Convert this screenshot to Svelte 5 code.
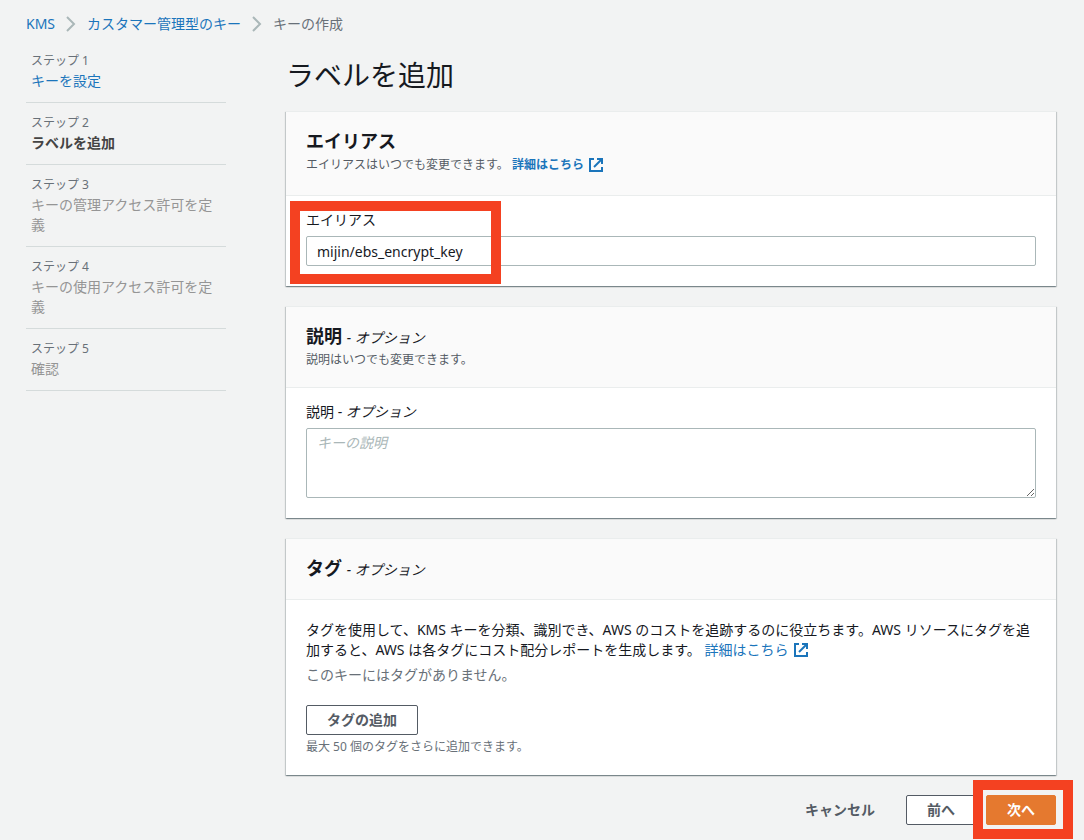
<script>
    const steps = [
        { title: 'キーを設定', state: 'done' },
        { title: 'ラベルを追加', state: 'active' },
        { title: 'キーの管理アクセス許可を定義', state: 'todo' },
        { title: 'キーの使用アクセス許可を定義', state: 'todo' },
        { title: '確認', state: 'todo' }
    ];

    let alias = $state('mijin/ebs_encrypt_key');
    let description = $state('');
</script>

{#snippet chevron()}
    <svg class="chevron" width="10" height="16" viewBox="0 0 10 16" fill="none" stroke="currentColor" stroke-width="2" aria-hidden="true">
        <path d="M1 1l7 7-7 7" />
    </svg>
{/snippet}

{#snippet external()}
    <svg class="external" width="16" height="16" viewBox="0 0 16 16" fill="none" stroke="currentColor" stroke-width="2" aria-hidden="true">
        <path d="M6 2H2v12h12v-4" />
        <path d="M9 2h5v5" />
        <path d="M6 10l8-8" />
    </svg>
{/snippet}

<nav class="breadcrumb" aria-label="breadcrumb">
    <a href="#kms">KMS</a>
    {@render chevron()}
    <a href="#keys">カスタマー管理型のキー</a>
    {@render chevron()}
    <span>キーの作成</span>
</nav>

<div class="layout">
    <ol class="steps">
        {#each steps as step, i}
            <li class={step.state}>
                <small>ステップ {i + 1}</small>
                {#if step.state === 'done'}
                    <a href="#step1">{step.title}</a>
                {:else}
                    <span>{step.title}</span>
                {/if}
            </li>
        {/each}
    </ol>

    <main>
        <h1>ラベルを追加</h1>

        <section class="card">
            <header>
                <h2>エイリアス</h2>
                <p class="with-link">エイリアスはいつでも変更できます。 <a class="strong" href="#alias-help">詳細はこちら {@render external()}</a></p>
            </header>
            <div class="body field">
                <div class="marked">
                    <label for="alias">エイリアス</label>
                    <input id="alias" type="text" bind:value={alias} />
                    <div class="marker marker-alias"></div>
                </div>
            </div>
        </section>

        <section class="card">
            <header>
                <h2>説明 <em>- オプション</em></h2>
                <p>説明はいつでも変更できます。</p>
            </header>
            <div class="body field">
                <label for="description">説明 - <em>オプション</em></label>
                <textarea id="description" placeholder="キーの説明" bind:value={description}></textarea>
            </div>
        </section>

        <section class="card">
            <header>
                <h2>タグ <em>- オプション</em></h2>
            </header>
            <div class="body">
                <p>タグを使用して、KMS キーを分類、識別でき、AWS のコストを追跡するのに役立ちます。AWS リソースにタグを追加すると、AWS は各タグにコスト配分レポートを生成します。 <a href="#tag-help">詳細はこちら {@render external()}</a></p>
                <p class="empty">このキーにはタグがありません。</p>
                <button type="button">タグの追加</button>
                <p class="hint">最大 50 個のタグをさらに追加できます。</p>
            </div>
        </section>

        <footer>
            <button type="button" class="link">キャンセル</button>
            <button type="button">前へ</button>
            <div class="marked">
                <button type="button" class="primary">次へ</button>
                <div class="marker marker-next"></div>
            </div>
        </footer>
    </main>
</div>

<style>
    :global(body) {
        margin: 0;
        background: #f2f3f3;
        color: #16191f;
        font-family: 'Noto Sans', 'Noto Sans CJK JP', sans-serif;
        font-size: 14px;
        line-height: 20px;
    }

    h1, h2, p, ol {
        margin: 0;
        padding: 0;
        font-weight: 400;
    }

    a {
        color: #1b75bb;
        text-decoration: none;
    }

    a:hover {
        text-decoration: underline;
    }

    /* Breadcrumb */

    .breadcrumb {
        display: flex;
        align-items: center;
        gap: 11px;
        padding: 14px 26px 7px;
        color: #687078;
    }

    .chevron {
        color: #aab7b8;
    }

    .layout {
        display: flex;
        align-items: flex-start;
        gap: 60px;
        padding: 0 28px 0 26px;
    }

    /* Wizard steps */

    .steps {
        flex: 0 0 200px;
        list-style: none;
    }

    .steps li {
        display: flex;
        flex-direction: column;
        padding: 10px 5px 11px;
        border-bottom: 1px solid #d5dbdb;
        color: #959595;
    }

    .steps small {
        font-size: 12px;
        color: #687078;
    }

    .steps .active span {
        font-weight: 700;
        color: #444;
    }

    main {
        flex: 1;
        min-width: 0;
    }

    h1 {
        padding: 18px 0 19px;
        font-size: 28px;
        line-height: 33px;
    }

    /* Cards */

    .card {
        margin-bottom: 20px;
        background: #fff;
        border-top: 1px solid #eaeded;
        box-shadow:
            0 1px 1px 0 rgba(0, 28, 36, 0.3),
            1px 1px 1px 0 rgba(0, 28, 36, 0.15),
            -1px 1px 1px 0 rgba(0, 28, 36, 0.15);
    }

    .card header {
        padding: 15px 20px 17px;
        background: #fafafa;
        border-bottom: 1px solid #eaeded;
    }

    h2 {
        font-size: 18px;
        font-weight: 700;
        line-height: 28px;
    }

    h2 em {
        font-size: 14px;
        font-weight: 400;
        line-height: 20px;
    }

    header p {
        font-size: 12px;
        color: #545b64;
    }

    .with-link {
        padding-bottom: 3px;
    }

    .strong {
        font-weight: 700;
    }

    .external {
        vertical-align: middle;
        margin: -3px 1px -1px;
    }

    .body {
        padding: 20px;
    }

    .field {
        padding-top: 14px;
    }

    label {
        display: block;
        margin-bottom: 6px;
    }

    input, textarea {
        display: block;
        box-sizing: border-box;
        width: 100%;
        height: 30px;
        padding: 4px 10px;
        border: 1px solid #aab7b8;
        border-radius: 2px;
        background: #fff;
        color: #16191f;
        font: inherit;
    }

    textarea {
        height: 70px;
        resize: vertical;
    }

    textarea::placeholder {
        color: #aab7b8;
        font-style: italic;
    }

    .empty {
        margin: 5px 0 20px;
        color: #687078;
    }

    .hint {
        margin-top: 4px;
        font-size: 12px;
        line-height: 16px;
        color: #687078;
    }

    /* Buttons */

    button {
        display: block;
        padding: 4px 20px;
        border: 1px solid #545b64;
        border-radius: 2px;
        background: #fff;
        color: #545b64;
        font: inherit;
        font-weight: 700;
        cursor: pointer;
    }

    button.link {
        border-color: transparent;
        background: transparent;
    }

    button.primary {
        border-color: #e5792f;
        background: #e5792f;
        color: #fff;
    }

    footer {
        display: flex;
        justify-content: flex-end;
        gap: 10px;
        padding-bottom: 15px;
    }

    /* Red callout frames laid over the form */

    .marked {
        position: relative;
    }

    .marker {
        position: absolute;
        box-sizing: border-box;
        border: 10px solid #f44121;
        pointer-events: none;
    }

    .marker-alias {
        top: -9px;
        left: -16px;
        width: 211px;
        height: 83px;
    }

    .marker-next {
        top: -15px;
        left: -13px;
        width: 100px;
        height: 59px;
    }
</style>
